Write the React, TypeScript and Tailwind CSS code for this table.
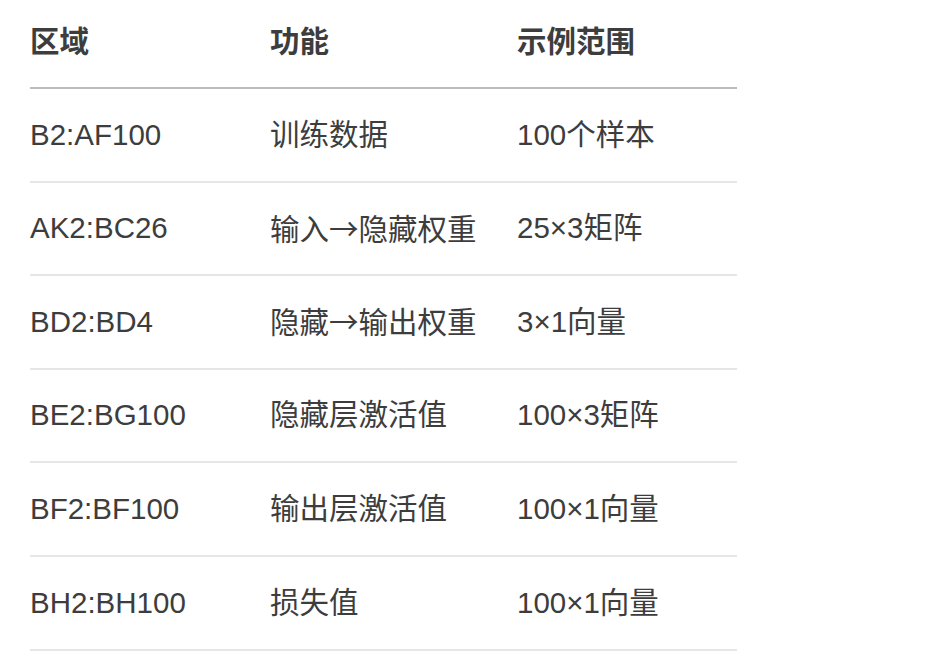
import React from "react";

const Arrow = () => (
  <span style={{ fontFamily: '"Noto Sans CJK SC", sans-serif' }}>→</span>
);

const rows: [string, React.ReactNode, string][] = [
  ["B2:AF100", "训练数据", "100个样本"],
  ["AK2:BC26", <>输入<Arrow />隐藏权重</>, "25×3矩阵"],
  ["BD2:BD4", <>隐藏<Arrow />输出权重</>, "3×1向量"],
  ["BE2:BG100", "隐藏层激活值", "100×3矩阵"],
  ["BF2:BF100", "输出层激活值", "100×1向量"],
  ["BH2:BH100", "损失值", "100×1向量"],
];

export default function App() {
  return (
    <div
      className="w-[928px] h-[670px] bg-white overflow-hidden text-[#3d3d3d] text-[29.5px]"
      style={{ fontFamily: '"Liberation Sans", "Noto Sans CJK SC", sans-serif' }}
    >
      <div className="ml-[30px] w-[707px] flex flex-col">
        <div className="flex items-center h-[89px] border-b-2 border-[#bcbcbc] font-bold pb-[2px]">
          <div className="w-[240px]">区域</div>
          <div className="w-[247px]">功能</div>
          <div className="w-[220px]">示例范围</div>
        </div>
        {rows.map((r) => (
          <div key={r[0]} className="flex items-center h-[93.6px] border-b-2 border-[#e6e6e6]">
            <div className="w-[240px]">{r[0]}</div>
            <div className="w-[247px] whitespace-nowrap">{r[1]}</div>
            <div className="w-[220px]">{r[2]}</div>
          </div>
        ))}
      </div>
    </div>
  );
}
